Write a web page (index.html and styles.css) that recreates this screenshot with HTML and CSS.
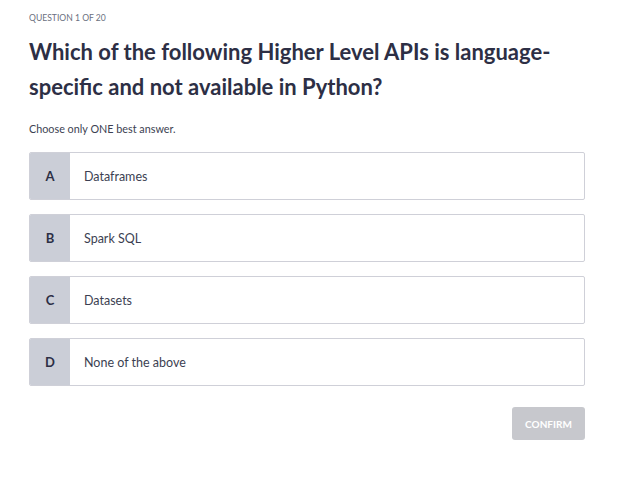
FILE: index.html
```html
<!DOCTYPE html>
<html>
<head>
<meta charset="utf-8">
<link rel="stylesheet" href="styles.css">
</head>
<body>
<main class="quiz">
  <div class="counter">QUESTION 1 OF 20</div>
  <h1 class="question">Which of the following Higher Level APIs is language-specific and not available in Python?</h1>
  <p class="hint">Choose only ONE best answer.</p>
  <div class="options">
    <div class="option"><span class="letter">A</span><span class="text">Dataframes</span></div>
    <div class="option"><span class="letter">B</span><span class="text">Spark SQL</span></div>
    <div class="option"><span class="letter">C</span><span class="text">Datasets</span></div>
    <div class="option"><span class="letter">D</span><span class="text">None of the above</span></div>
  </div>
  <div class="actions"><button class="confirm">CONFIRM</button></div>
</main>
</body>
</html>
```
FILE: styles.css
```css
* { box-sizing: border-box; }
body {
  margin: 0;
  background: #fff;
  font-family: Lato, "Open Sans", sans-serif;
  color: #2d2f45;
}
.quiz {
  width: 556px;
  margin-left: 29px;
  padding-top: 12px;
}
.counter {
  font-size: 8.6px;
  color: #6b7080;
  line-height: 12px;
}
.question {
  margin: 10px 0 0;
  font-size: 22px;
  font-weight: 700;
  line-height: 35px;
  color: #2d2f45;
}
.hint {
  margin: 18px 0 0;
  font-size: 10.8px;
  line-height: 14px;
  color: #3c3f52;
}
.options {
  margin-top: 16px;
  display: flex;
  flex-direction: column;
  gap: 14px;
}
.option {
  display: flex;
  height: 48px;
  border: 1px solid #cfd0d8;
  border-radius: 2px;
  background: #fff;
  overflow: hidden;
}
.letter {
  width: 40px;
  background: #cbced7;
  display: flex;
  align-items: center;
  justify-content: center;
  font-weight: 700;
  font-size: 13px;
  color: #2d2f45;
}
.text {
  display: flex;
  align-items: center;
  padding-left: 14px;
  font-size: 12.5px;
  color: #3c3f52;
}
.actions {
  display: flex;
  justify-content: flex-end;
  margin-top: 21px;
}
.confirm {
  width: 73px;
  height: 33px;
  border: none;
  border-radius: 3px;
  background: #c7c8cd;
  color: #fff;
  font-family: inherit;
  font-weight: 700;
  font-size: 10px;
  padding: 0;
}
```
